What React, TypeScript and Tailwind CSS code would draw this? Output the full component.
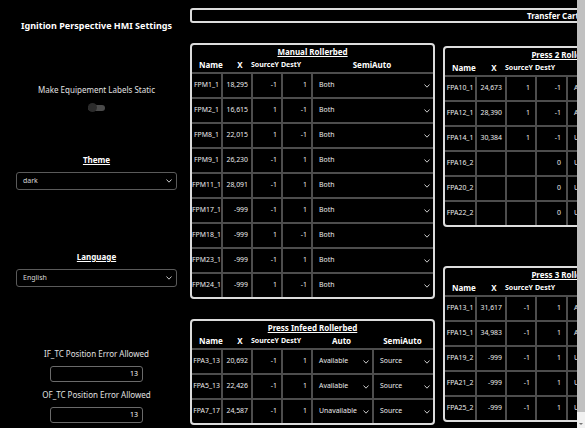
import React from 'react';

const LINE = 'border-[#4d4d4d]';

function Chevron() {
  return (
    <svg width="6" height="4" viewBox="0 0 6 4" className="shrink-0">
      <polyline points="0.5,0.5 3,3.2 5.5,0.5" fill="none" stroke="#c8c8c8" strokeWidth="1" />
    </svg>
  );
}

type CardProps = {
  title: string;
  grid: string;
  headers: string[];
  rows: string[][];
  numPad: string;
};

function Card({ title, grid, headers, rows, numPad }: CardProps) {
  return (
    <div className="w-[245px] shrink-0 border-2 border-[#dcdcdc] rounded-[4px] overflow-hidden">
      <div className="h-[13px] flex items-center justify-center text-[8px] font-bold text-white underline underline-offset-1">
        {title}
      </div>
      <div className={`grid ${grid} h-[14px] items-center text-white font-bold`}>
        {headers.map((h, i) => {
          if (i === 0) return <div key={h} className="text-[8px] text-center pl-[7px]">{h}</div>;
          if (i === 1) return <div key={h} className="text-[8px] text-center pl-[8px]">{h}</div>;
          if (i < 4) return <div key={h} className="text-[7px] text-left whitespace-nowrap">{h}</div>;
          return <div key={h} className="text-[8px] text-center whitespace-nowrap">{h}</div>;
        })}
      </div>
      {rows.map((row) => (
        <div key={row[0]} className={`grid ${grid} h-[25px] border-t-2 ${LINE} text-[6.9px] text-[#ececec]`}>
          {row.map((v, i) => {
            if (i === 0)
              return (
                <div key={i} className="flex items-center justify-center whitespace-nowrap">
                  {v}
                </div>
              );
            if (i < 4)
              return (
                <div key={i} className={`flex items-center justify-end border-l-2 ${LINE} ${i === 1 ? 'pr-[3px]' : numPad}`}>
                  {v}
                </div>
              );
            return (
              <div key={i} className={`flex items-center justify-between border-l-2 ${LINE} pl-[6px] pr-[3px] whitespace-nowrap`}>
                <span>{v}</span>
                <Chevron />
              </div>
            );
          })}
        </div>
      ))}
    </div>
  );
}

const manualRows = [
  ['FPM1_1', '18,295', '-1', '1', 'Both'],
  ['FPM2_1', '16,615', '1', '-1', 'Both'],
  ['FPM8_1', '22,015', '1', '-1', 'Both'],
  ['FPM9_1', '26,230', '-1', '1', 'Both'],
  ['FPM11_1', '28,091', '-1', '1', 'Both'],
  ['FPM17_1', '-999', '-1', '1', 'Both'],
  ['FPM18_1', '-999', '1', '-1', 'Both'],
  ['FPM23_1', '-999', '-1', '1', 'Both'],
  ['FPM24_1', '-999', '1', '-1', 'Both'],
];

const infeedRows = [
  ['FPA3_13', '20,692', '-1', '1', 'Available', 'Source'],
  ['FPA5_13', '22,426', '-1', '1', 'Available', 'Source'],
  ['FPA7_17', '24,587', '-1', '1', 'Unavailable', 'Source'],
];

const press2Rows = [
  ['FPA10_1', '24,673', '1', '-1', 'Available', 'Destination'],
  ['FPA12_1', '28,390', '1', '-1', 'Available', 'Destination'],
  ['FPA14_1', '30,384', '1', '-1', 'Unavailable', 'Destination'],
  ['FPA16_2', '', '', '0', 'Unavailable', 'Both'],
  ['FPA20_2', '', '', '0', 'Unavailable', 'Both'],
  ['FPA22_2', '', '', '0', 'Unavailable', 'Both'],
];

const press3Rows = [
  ['FPA13_1', '31,617', '-1', '1', 'Available', 'Source'],
  ['FPA15_1', '34,983', '-1', '1', 'Available', 'Source'],
  ['FPA19_2', '-999', '-1', '1', 'Unavailable', 'Source'],
  ['FPA21_2', '-999', '-1', '1', 'Unavailable', 'Source'],
  ['FPA25_2', '-999', '-1', '1', 'Unavailable', 'Source'],
];

function SelectBox({ value }: { value: string }) {
  return (
    <div className="mt-[6px] w-[161px] h-[18px] border border-[#5a5a5a] rounded-[3px] flex items-center justify-between pl-[6px] pr-[4px] text-[7px] text-[#d8d8d8]">
      <span>{value}</span>
      <Chevron />
    </div>
  );
}

function NumberBox({ value }: { value: string }) {
  return (
    <div className="mt-[6px] w-[93px] h-[16px] border border-[#6a6a6a] rounded-[3px] flex items-center justify-end pr-[4px] text-[7px] text-white">
      {value}
    </div>
  );
}

export default function App() {
  const six = ['Name', 'X', 'SourceY', 'DestY', 'Auto', 'SemiAuto'];
  return (
    <div className="h-[428px] w-full flex bg-black overflow-hidden font-['Noto_Sans',sans-serif]">
      <div className="w-[190px] shrink-0 pl-[3px] flex flex-col items-center">
        <div className="mt-[20px] h-[12px] leading-[12px] text-[9px] font-bold text-white whitespace-nowrap">
          Ignition Perspective HMI Settings
        </div>
        <div className="mt-[52px] h-[12px] leading-[12px] text-[8px] text-[#e0e0e0] whitespace-nowrap">
          Make Equipement Labels Static
        </div>
        <div className="mt-[7px] w-[17px] h-[9px] flex items-center">
          <div className="w-[17px] h-[6px] shrink-0 rounded-full bg-[#4a4a4a]" />
          <div className="w-[9px] h-[9px] shrink-0 -ml-[17px] rounded-full bg-[#2b2b2b]" />
        </div>
        <div className="mt-[42px] h-[12px] leading-[12px] text-[8px] font-bold text-white underline underline-offset-1">Theme</div>
        <SelectBox value="dark" />
        <div className="mt-[61px] h-[12px] leading-[12px] text-[8px] font-bold text-white underline underline-offset-1">Language</div>
        <SelectBox value="English" />
        <div className="mt-[61px] h-[12px] leading-[12px] text-[8px] text-[#e0e0e0] whitespace-nowrap">IF_TC Position Error Allowed</div>
        <NumberBox value="13" />
        <div className="mt-[7px] h-[12px] leading-[12px] text-[8px] text-[#e0e0e0] whitespace-nowrap">OF_TC Position Error Allowed</div>
        <NumberBox value="13" />
      </div>

      <div className="flex-1 min-w-0 overflow-hidden flex flex-col">
        <div className="mt-[8px] w-[726px] h-[15px] shrink-0 border-2 border-[#dcdcdc] rounded-[3px] flex items-center justify-center text-[8px] font-bold text-white">
          Transfer Cart
        </div>
        <div className="flex gap-[8px] items-start">
          <div className="mt-[20px] flex flex-col gap-[20px]">
            <Card
              title="Manual Rollerbed"
              grid="grid-cols-[29px_30px_30px_30px_1fr]"
              headers={['Name', 'X', 'SourceY', 'DestY', 'SemiAuto']}
              rows={manualRows}
              numPad="pr-[4px]"
            />
            <Card
              title="Press Infeed Rollerbed"
              grid="grid-cols-[29px_30px_30px_30px_61px_1fr]"
              headers={six}
              rows={infeedRows}
              numPad="pr-[4px]"
            />
          </div>
          <div className="mt-[23px] flex flex-col gap-[39px]">
            <Card
              title="Press 2 Rollerbed"
              grid="grid-cols-[30px_30px_30px_31px_61px_1fr]"
              headers={six}
              rows={press2Rows}
              numPad="pr-[5px]"
            />
            <Card
              title="Press 3 Rollerbed"
              grid="grid-cols-[30px_30px_30px_31px_61px_1fr]"
              headers={six}
              rows={press3Rows}
              numPad="pr-[5px]"
            />
          </div>
        </div>
      </div>

      <div className="w-[8px] shrink-0 flex flex-col bg-[#f1f1f1]">
        <div className="flex-1 bg-[#c1c1c1]" />
        <div className="h-[16px] flex items-end justify-center pb-[3px]">
          <div className="w-0 h-0 border-l-[2px] border-r-[2px] border-t-[2px] border-l-transparent border-r-transparent border-t-[#777]" />
        </div>
      </div>
    </div>
  );
}
